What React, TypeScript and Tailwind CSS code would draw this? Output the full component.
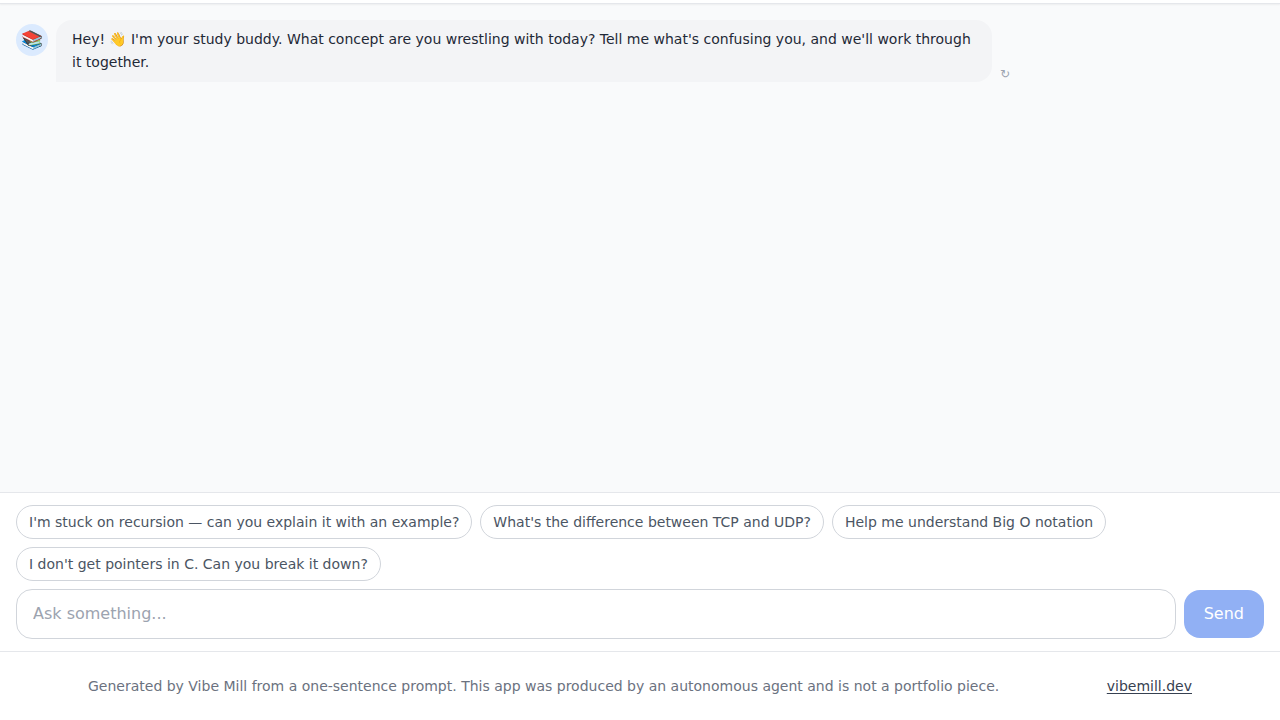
import { useState } from "react";

const suggestions = [
  "I'm stuck on recursion — can you explain it with an example?",
  "What's the difference between TCP and UDP?",
  "Help me understand Big O notation",
  "I don't get pointers in C. Can you break it down?",
];

function AssistantMessage({ text }: { text: string }) {
  return (
    <div className="flex items-start gap-2">
      <div
        aria-hidden="true"
        className="mt-1 flex size-8 shrink-0 items-center justify-center rounded-full bg-[#dbeafe] text-lg"
      >
        📚
      </div>
      <p className="max-w-[75%] rounded-2xl rounded-bl-none bg-[#f3f4f6] px-4 py-2 text-sm leading-[23px] text-[#1f2937]">
        {text}
      </p>
      <button type="button" aria-label="Regenerate" className="self-end text-xs text-[#9ca3af]">
        ↻
      </button>
    </div>
  );
}

export default function App() {
  const [draft, setDraft] = useState("");

  return (
    <div className="flex min-h-screen flex-col bg-white font-['DejaVu_Sans',sans-serif]">
      <header className="relative h-1 border-b border-[#e5e7eb] bg-white shadow-[0_1px_2px_0_rgb(0_0_0/0.05)]" />

      <main className="flex flex-1 flex-col">
        <section aria-label="Conversation" className="flex-1 bg-[#f9fafb] p-4">
          <AssistantMessage text="Hey! 👋 I'm your study buddy. What concept are you wrestling with today? Tell me what's confusing you, and we'll work through it together." />
        </section>

        <section className="border-t border-[#e5e7eb] bg-white px-4 py-3">
          <div className="mb-2 flex flex-wrap gap-2">
            {suggestions.map((suggestion) => (
              <button
                key={suggestion}
                type="button"
                onClick={() => setDraft(suggestion)}
                className="rounded-full border border-[#d1d5db] bg-white px-3 py-1.5 text-sm text-[#4b5563]"
              >
                {suggestion}
              </button>
            ))}
          </div>
          <form className="flex items-center gap-2" onSubmit={(event) => event.preventDefault()}>
            <input
              type="text"
              aria-label="Your question"
              placeholder="Ask something..."
              value={draft}
              onChange={(event) => setDraft(event.target.value)}
              className="min-w-0 flex-1 rounded-2xl border border-[#d1d5db] bg-white px-4 py-3 text-base text-[#1f2937] placeholder:text-[#9ca3af]"
            />
            <button
              type="submit"
              disabled={draft.trim() === ""}
              className="rounded-2xl bg-[#2563eb] px-5 py-3 text-base text-white disabled:opacity-50"
            >
              Send
            </button>
          </form>
        </section>
      </main>

      <footer className="border-t border-[#e5e7eb] bg-white">
        <div className="mx-auto flex max-w-6xl items-center justify-between gap-4 px-6 py-6 text-sm text-[#6b7280]">
          <p>
            Generated by Vibe Mill from a one-sentence prompt. This app was produced by an autonomous agent and is not a
            portfolio piece.
          </p>
          <a href="https://vibemill.dev" className="text-[#374151] underline underline-offset-2">
            vibemill.dev
          </a>
        </div>
      </footer>
    </div>
  );
}
